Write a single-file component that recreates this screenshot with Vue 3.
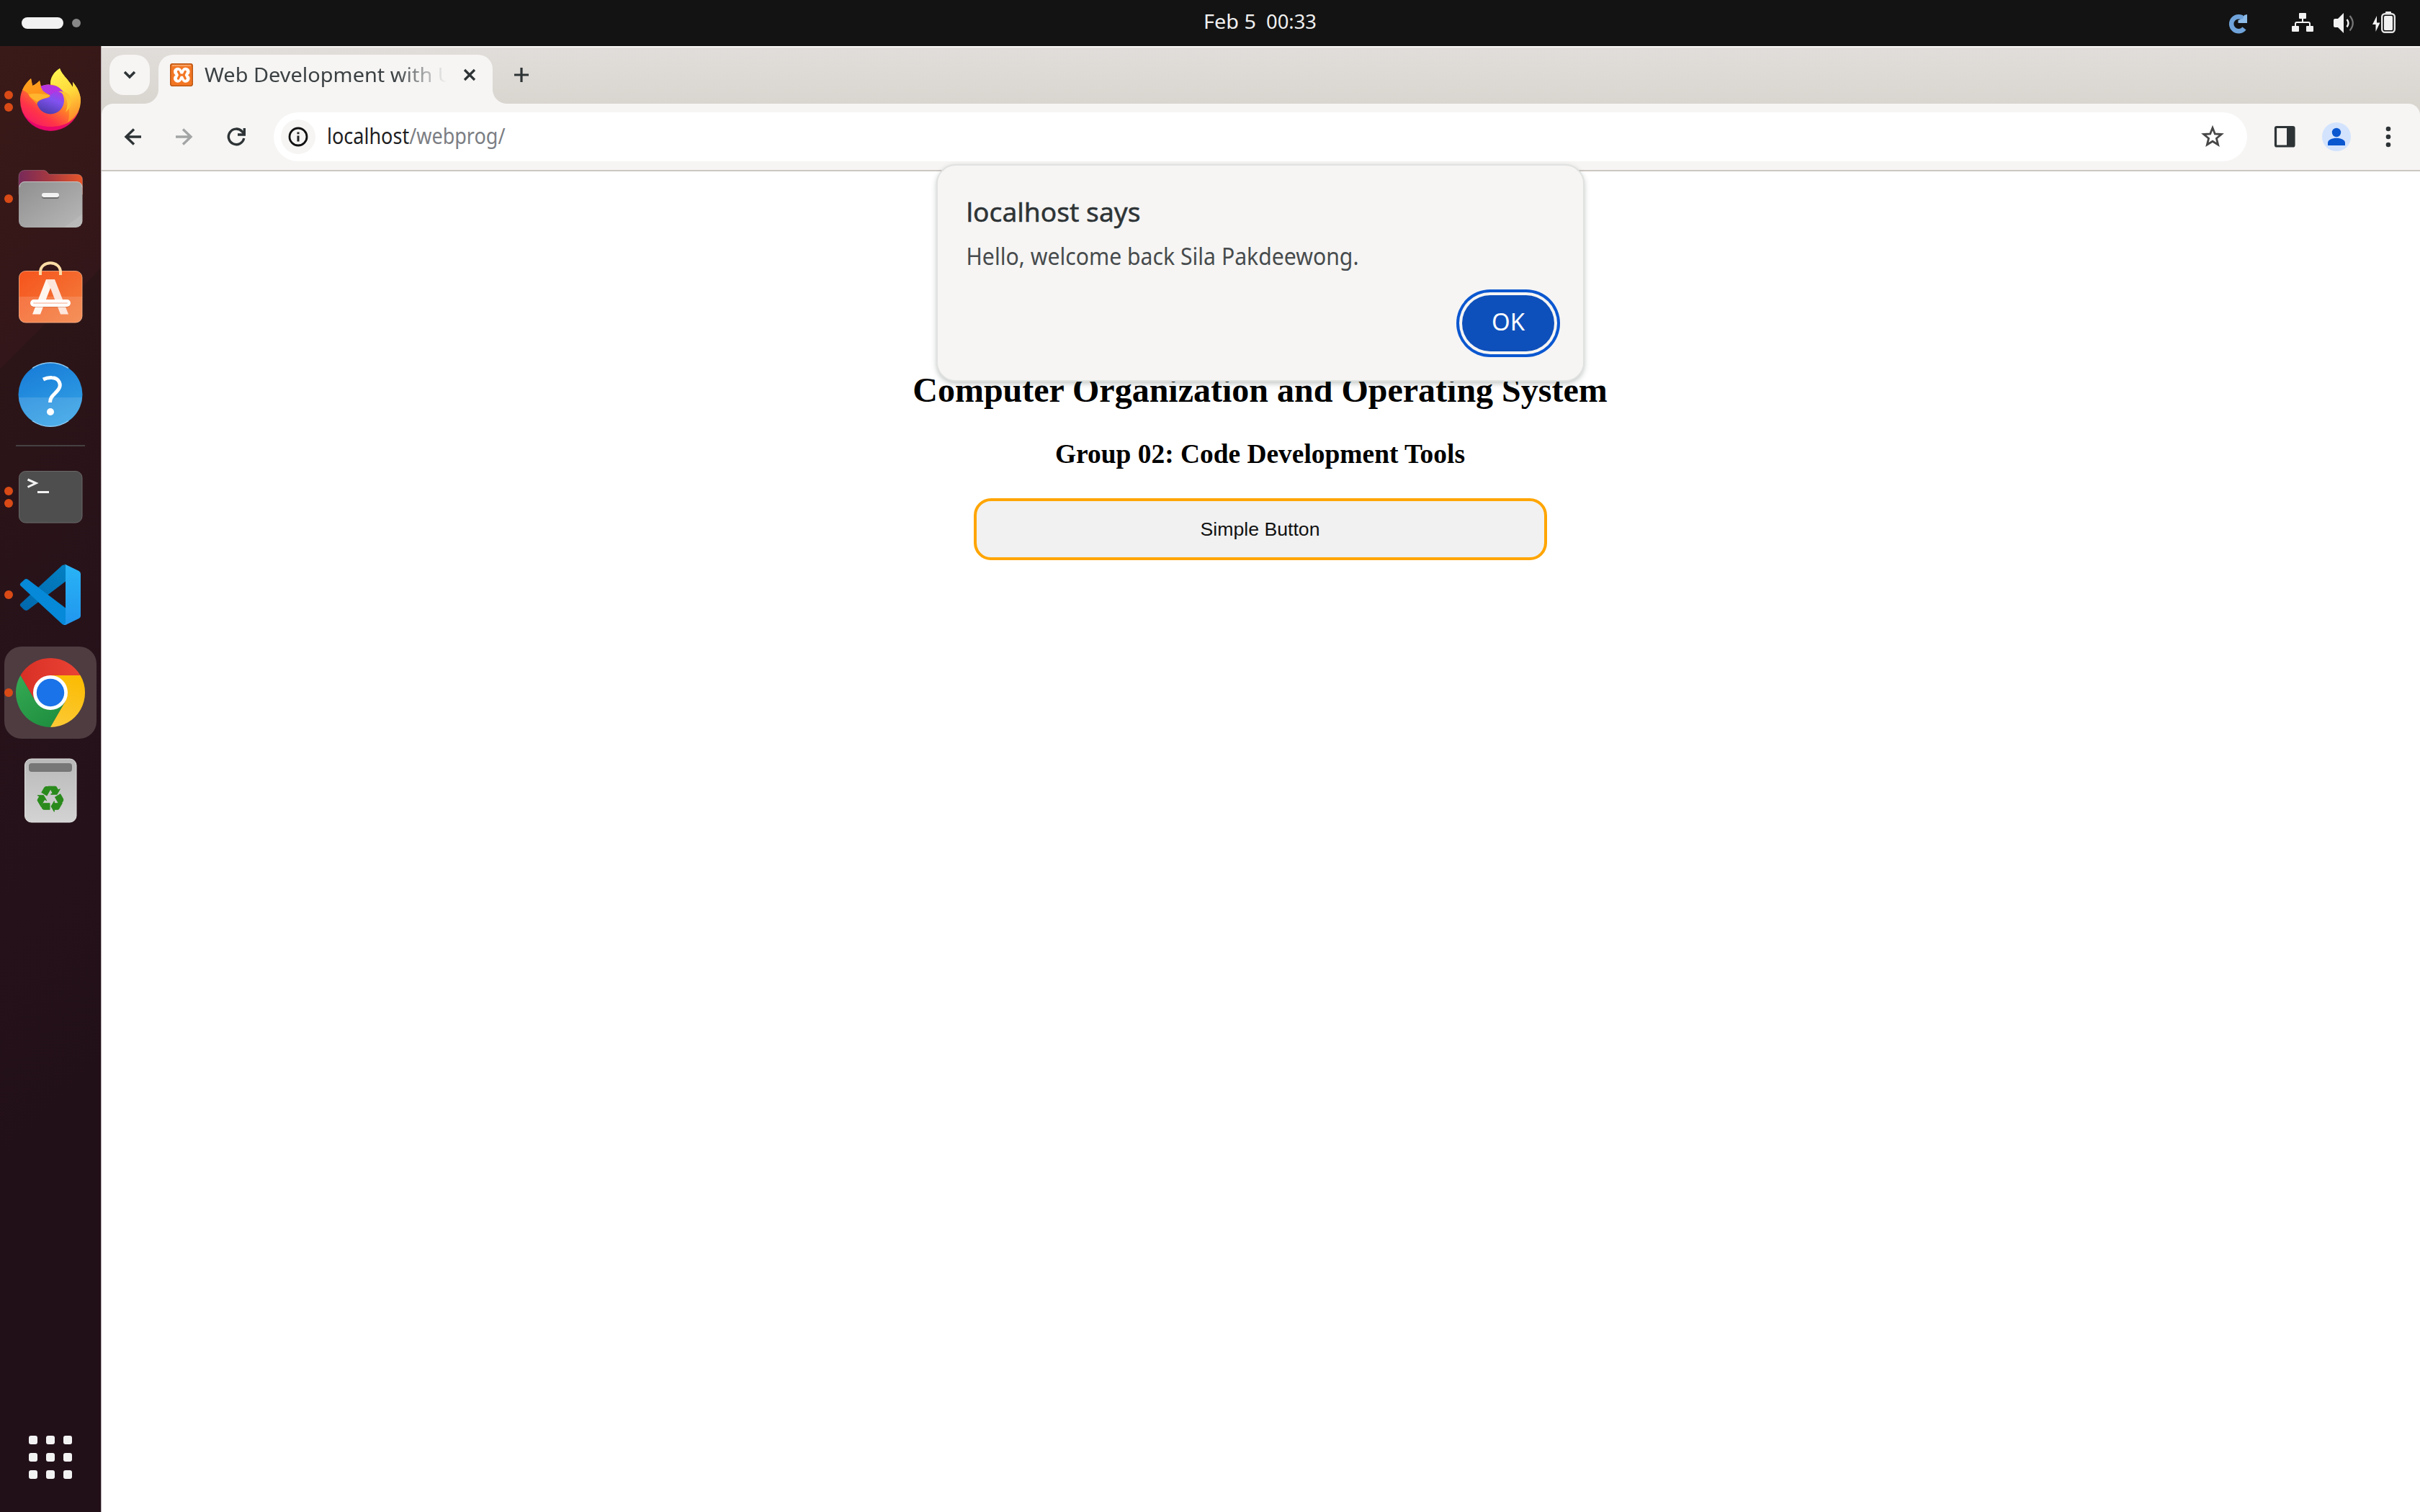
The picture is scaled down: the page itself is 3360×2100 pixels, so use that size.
<script setup>
const gridDots = [0, 1, 2, 3, 4, 5, 6, 7, 8]
</script>

<template>
  <div class="desktop">
    <header class="topbar">
      <div class="workspaces"><span class="pill"></span><span class="spot"></span></div>
      <svg class="clock" width="160" height="64" viewBox="0 0 160 64">
        <text x="-1" y="40" font-size="28" textLength="73" lengthAdjust="spacingAndGlyphs">Feb 5</text>
        <text x="86" y="40" font-size="28" textLength="70" lengthAdjust="spacingAndGlyphs">00:33</text>
      </svg>
      <svg class="tray" width="260" height="64" viewBox="3080 0 260 64">
        <path d="M3115.500 26.500A10 10 0 1 0 3116 39.500" fill="none" stroke="#6fa3da" stroke-width="6.500" />
        <path d="M3120 20V32H3107.500V28L3114 26L3116 21Z" fill="#8dbbe8" />
        <g fill="#f2f2f2">
          <rect x="3192" y="18" width="10" height="8" rx="1" /><rect x="3182" y="36" width="10" height="8" rx="1" /><rect x="3202" y="36" width="10" height="8" rx="1" />
          <path d="M3187 36V33Q3187 31 3189 31H3205Q3207 31 3207 33V36M3197 26V31" fill="none" stroke="#f2f2f2" stroke-width="2" />
          <path d="M3242 26H3246L3254 18V46L3246 38H3242Q3240 38 3240 36V28Q3240 26 3242 26Z" />
          <path d="M3258.500 27Q3262.500 32 3258.500 37.500" fill="none" stroke="#f2f2f2" stroke-width="2.400" />
          <path d="M3262.500 22Q3271 32 3262.500 42.500" fill="none" stroke="#777" stroke-width="2.200" />
          <path d="M3300 22L3294 34H3298.500V44L3304.500 31.500H3300Z" />
          <rect x="3312" y="16" width="8" height="3" rx="1" />
          <rect x="3307.200" y="19.200" width="17.600" height="25.600" rx="4" fill="none" stroke="#e4e4e4" stroke-width="2.400" />
          <rect x="3310" y="22" width="12" height="20" rx="1.500" />
        </g>
      </svg>
    </header>

    <div class="body">
      <nav class="dock">
        <div class="item">
          <span class="running"><i></i><i></i></span>
          <svg viewBox="6 76 128 128">
            <defs>
              <linearGradient id="ffBody" x1=".85" y1=".1" x2=".25" y2="1">
                <stop offset="0" stop-color="#fff44f" /><stop offset=".3" stop-color="#ffc02e" /><stop offset=".52" stop-color="#ff7a2a" /><stop offset=".75" stop-color="#ff3548" /><stop offset="1" stop-color="#f5156a" />
              </linearGradient>
              <linearGradient id="ffGlobe" x1=".7" y1="0" x2=".3" y2="1">
                <stop offset="0" stop-color="#b833e1" /><stop offset=".45" stop-color="#8152f0" /><stop offset="1" stop-color="#4a3aa8" />
              </linearGradient>
              <linearGradient id="ffFlame" x1=".3" y1="0" x2=".6" y2="1">
                <stop offset="0" stop-color="#fff44f" /><stop offset=".5" stop-color="#ffd83a" /><stop offset="1" stop-color="#ff8a2a" />
              </linearGradient>
              <linearGradient id="ffHead" x1=".2" y1="0" x2=".6" y2="1">
                <stop offset="0" stop-color="#ffa51c" /><stop offset="1" stop-color="#ff8a1c" />
              </linearGradient>
            </defs>
            <path d="M28 139C28 128 34 117 43 109L45 119C49 118 52 115 55 112L57 120C62 118 66 117 70 118L70 117C70 107 75 100 83 95C86 104 94 109 101 121L101 114C108 122 112 131 112 140A42 42 0 0 1 28 139Z" fill="url(#ffBody)" />
            <path d="M29 149A42 42 0 0 0 111 149C105 168 90 176 70 176C50 176 34 166 29 149Z" fill="#e3006e" opacity=".8" />
            <path d="M70 117C70 107 75 100 83 95C86 104 94 109 101 121L101 114C108 122 112 131 112 140C111 153 104 163 94 170C98 160 97 145 88 128C82 121 76 117 70 117Z" fill="url(#ffFlame)" />
            <circle cx="70" cy="139.500" r="19" fill="url(#ffGlobe)" />
            <path d="M81 127C92 130 97 143 91 156C98 150 100 141 98 135C95 129 88 125 81 127Z" fill="#ffc433" />
            <path d="M56 120C60 118 66 117 70 118C78 118 84 122 88 128C82 125 75 127 70 132L60 126Z" fill="#b535e0" />
            <path d="M31 125C34 118 38 113 43 109L45 119C48 118 52 115 55 112L56.500 121C58 126 63 129 69 132C71 135 66 136 61 137C55 139 52 141 51 145C46 138 40 135 40 132C38 128 34 126 31 125Z" fill="url(#ffHead)" />
            <path d="M40 131C47 129 58 130 69 132C69 136 58 136 52 141C48 139 42 136 40 131Z" fill="#ffb52e" />
          </svg>
        </div>
        <div class="item">
          <span class="running"><i></i></span>
          <svg viewBox="6 212 128 128">
            <defs>
              <linearGradient id="folder"><stop offset="0" stop-color="#77295a" /><stop offset=".5" stop-color="#a8393f" /><stop offset="1" stop-color="#e8562a" /></linearGradient>
              <linearGradient id="drawer" x1="0" y1="0" x2="1" y2="1"><stop offset="0" stop-color="#8f8f8f" /><stop offset=".85" stop-color="#b2b2b2" /><stop offset=".86" stop-color="#b9b9b9" /><stop offset="1" stop-color="#bbb" /></linearGradient>
            </defs>
            <path d="M26 270V246Q26 236.500 35 236.500H61Q63 236.500 64.500 238L68 242H106Q114.500 242 114.500 250V270Z" fill="url(#folder)" stroke="#fff" stroke-opacity=".2" />
            <rect x="26" y="252" width="88.500" height="64" rx="9" fill="url(#drawer)" />
            <path d="M27 260Q27.500 252.500 35 252.500H105.500Q113.500 252.500 114 260" fill="none" stroke="#c4c4c4" />
            <rect x="58" y="270" width="24" height="6" rx="3" fill="#6e6e6e" /><rect x="58" y="268" width="24" height="6" rx="3" fill="#f2f2f2" />
          </svg>
        </div>
        <div class="item">
          <svg viewBox="6 348 128 128">
            <defs><linearGradient id="bag" x1="0" y1="0" x2="1" y2="1"><stop offset="0" stop-color="#f6541c" /><stop offset="1" stop-color="#f37f3f" /></linearGradient></defs>
            <rect x="26.500" y="376.500" width="87.500" height="71.500" rx="9" fill="url(#bag)" stroke="#fbb085" stroke-opacity=".8" />
            <path d="M26.500 412H114V439Q114 448 105 448H35.500Q26.500 448 26.500 439Z" fill="#fff" opacity=".14" />
            <path d="M56 382V378C56 361 84 361 84 378V382" fill="none" stroke="#fbdca6" stroke-width="4" />
            <path d="M64 388H70V400L56 436.500H45Z" fill="#fff6f0" /><path d="M64 388H76L95 436.500H84L70 400Z" fill="#fde6dc" />
            <rect x="42" y="417" width="56" height="10" rx="5" fill="#c65a30" opacity=".45" />
            <rect x="42" y="416" width="56" height="10" rx="5" fill="#fff" /><rect x="46" y="420" width="48" height="2" rx="1" fill="#fbd2c2" />
          </svg>
        </div>
        <div class="item">
          <svg viewBox="6 484 128 128">
            <defs><linearGradient id="help" x1=".3" y1="0" x2=".7" y2="1"><stop offset="0" stop-color="#187dd8" /><stop offset="1" stop-color="#35a3e6" /></linearGradient></defs>
            <circle cx="70" cy="548" r="44.500" fill="url(#help)" />
            <path d="M25.700 552H114.300A44.500 44.500 0 0 1 25.700 552Z" fill="#fff" opacity=".13" />
            <path d="M45 511.500A44 44 0 0 1 95 511.500M45 584.500A44 44 0 0 0 95 584.500" fill="none" stroke="#8fcaf3" stroke-width="1.500" />
            <path d="M60 527Q66 524 72 524.500C82 525 86 534 81 541C76 548 69.500 550 69.500 559" fill="none" stroke="#fff" stroke-width="5" /><circle cx="70" cy="572" r="5" fill="#fff" />
          </svg>
        </div>
        <div class="separator"></div>
        <div class="item">
          <span class="running"><i></i><i></i></span>
          <svg viewBox="6 626 128 128">
            <rect x="26.500" y="654.500" width="87.500" height="71.500" rx="9" fill="#4e4e4e" stroke="#686868" />
            <path d="M38.500 666L50 671L38.500 676.500" fill="none" stroke="#f2f2f2" stroke-width="3" /><rect x="52" y="682" width="16" height="3" fill="#f2f2f2" />
          </svg>
        </div>
        <div class="item">
          <span class="running"><i></i></span>
          <svg viewBox="6 762 128 128">
            <defs>
              <linearGradient id="codeRight" x1="0" y1="0" x2="0" y2="1"><stop offset="0" stop-color="#29b4f6" /><stop offset="1" stop-color="#2196ee" /></linearGradient>
              <linearGradient id="codeBack" x1="1" y1="0" x2="0" y2="1"><stop offset="0" stop-color="#0380c2" /><stop offset="1" stop-color="#0267ac" /></linearGradient>
            </defs>
            <path d="M28.500 838.500L86 785.500Q88 784 91 785V807.500L39 847Q36 849 33 846.500L28.500 842Q27 840 28.500 838.500Z" fill="url(#codeBack)" />
            <path d="M28.500 813.500Q27 811.500 28.500 810L33.500 805.500Q36 803 39 805L91 844.500V867.500Q88 868.500 86 866.500Z" fill="#0589d8" />
            <path d="M91 785Q90 784 89 784Q90.500 783.500 92 784.500L109.500 793Q112 794.500 112 797V855.500Q112 857.500 109.500 859L92 867.500Q90 868.500 88 867.500Q91 866.500 91 864Z" fill="url(#codeRight)" />
          </svg>
        </div>
        <div class="item active">
          <span class="running"><i></i></span>
          <svg viewBox="6 898 128 128">
            <defs>
              <linearGradient id="crRed"><stop offset="0" stop-color="#d93025" /><stop offset="1" stop-color="#ea4335" /></linearGradient>
              <linearGradient id="crGreen" x1=".2" y1="0" x2=".8" y2="1"><stop offset="0" stop-color="#34a853" /><stop offset="1" stop-color="#1e8e3e" /></linearGradient>
              <linearGradient id="crYellow" x1=".5" y1="0" x2=".3" y2="1"><stop offset="0" stop-color="#fbbc04" /><stop offset="1" stop-color="#fcc934" /></linearGradient>
            </defs>
            <path d="M28.400 938A48 48 0 0 1 111.600 938H70V962L49.200 974Z" fill="url(#crRed)" />
            <path d="M28.400 938A48 48 0 0 0 70 1010L90.800 974L70 962L49.200 974Z" fill="url(#crGreen)" />
            <path d="M111.600 938A48 48 0 0 1 70 1010L90.800 974L70 962V938Z" fill="url(#crYellow)" />
            <circle cx="70" cy="962" r="24" fill="#fff" /><circle cx="70" cy="962" r="19.200" fill="#1a73e8" />
          </svg>
        </div>
        <div class="item">
          <svg viewBox="6 1034 128 128">
            <defs><linearGradient id="bin" x1="0" y1="0" x2="0" y2="1"><stop offset="0" stop-color="#b9b9b9" /><stop offset="1" stop-color="#d3d3d3" /></linearGradient></defs>
            <rect x="34.500" y="1054" width="71.500" height="88" rx="9" fill="url(#bin)" stroke="#e0e0e0" />
            <rect x="40" y="1060" width="60" height="12" rx="4" fill="#777" />
            <text class="recycle" x="70" y="1126.500" text-anchor="middle">&#x267B;&#xFE0E;</text>
          </svg>
        </div>
        <div class="apps"><span v-for="n in gridDots" :key="n"></span></div>
      </nav>

      <section class="window">
        <div class="tabstrip">
          <div class="tabsearch"><svg width="56" height="56" viewBox="0 0 56 56"><path d="M21 24L28 31L35 24" fill="none" stroke="#2e3436" stroke-width="3.500" /></svg></div>
          <div class="tab">
            <svg class="favicon" width="32" height="32" viewBox="0 0 32 32">
              <rect x=".7" y=".7" width="30.600" height="30.600" rx="3" fill="#f37623" stroke="#bd5a17" stroke-width="1.600" />
              <path d="M3 3H29" stroke="#f9b27d" stroke-width="1.500" />
              <g fill="#fff"><circle cx="10.800" cy="11.500" r="5.800" /><circle cx="21.800" cy="11.500" r="5.800" /><circle cx="10.800" cy="21" r="5.800" /><circle cx="21.800" cy="21" r="5.800" /><rect x="8" y="10" width="16.500" height="12.500" /></g>
              <path d="M11.500 11.500L13.800 16.200L11.500 21M21.200 11.500L18.900 16.200L21.200 21M13.800 16.200H18.900" fill="none" stroke="#f37623" stroke-width="3.200" stroke-linecap="round" />
            </svg>
            <svg class="tabtitle" width="340" height="68" viewBox="0 0 340 68"><text x="0" y="38" font-size="28" textLength="345" lengthAdjust="spacingAndGlyphs">Web Development with U</text></svg>
            <svg class="close" width="20" height="20" viewBox="0 0 20 20"><path d="M3 3L17 17M17 3L3 17" stroke="#2e3436" stroke-width="3.200" /></svg>
          </div>
          <svg class="newtab" width="24" height="24" viewBox="0 0 24 24"><path d="M12 2V22M2 12H22" stroke="#2e3436" stroke-width="3.200" /></svg>
        </div>

        <div class="toolbar">
          <svg class="nav" width="200" height="92" viewBox="160 144 200 92">
            <g fill="none" stroke-width="3.400">
              <path d="M196 190H175M186 179.500L175 190L186 200.500" stroke="#2e3436" />
              <path d="M244 190H265M254 179.500L265 190L254 200.500" stroke="#a3a5a5" />
              <path d="M338.700 192A10.800 10.800 0 1 1 336 182.500L338.500 185.500" stroke="#2e3436" />
              <path d="M339.300 178V187H330" stroke="#2e3436" />
            </g>
          </svg>
          <div class="omnibox">
            <div class="info">
              <svg width="28" height="28" viewBox="0 0 28 28"><circle cx="14" cy="14" r="12" fill="none" stroke="#111" stroke-width="2.800" /><path d="M14 12.500V20.500M14 7.500V10.300" stroke="#222" stroke-width="3" /></svg>
            </div>
            <svg class="url" width="260" height="68" viewBox="0 0 260 68">
              <text x="0" y="43" font-size="30" fill="#7c7e84" textLength="247.500" lengthAdjust="spacingAndGlyphs"><tspan fill="#1f1f24">localhost</tspan>/webprog/</text>
            </svg>
            <svg class="star" width="36" height="36" viewBox="0 0 36 36"><path d="M18 5.500L21.300 13.900L30.300 14.500L23.400 20.200L25.600 29L18 24.200L10.400 29L12.600 20.200L5.700 14.500L14.700 13.900Z" fill="none" stroke="#474747" stroke-width="2.800" /></svg>
          </div>
          <svg class="actions" width="200" height="92" viewBox="3140 144 200 92">
            <rect x="3159.500" y="176.500" width="25.500" height="26.500" rx="1.500" fill="none" stroke="#2e3436" stroke-width="3.200" /><path d="M3175 176H3186V204H3175Z" fill="#2e3436" />
            <circle cx="3244" cy="190" r="20" fill="#d3e3fd" /><circle cx="3244" cy="184" r="6.200" fill="#0b57d0" /><path d="M3232 202V198.500C3232 189.500 3256 189.500 3256 198.500V202Z" fill="#0b57d0" />
            <g fill="#2e3436"><circle cx="3316" cy="179" r="3.300" /><circle cx="3316" cy="190" r="3.300" /><circle cx="3316" cy="201" r="3.300" /></g>
          </svg>
        </div>

        <main class="page">
          <h2>Computer Organization and Operating System</h2>
          <h3>Group 02: Code Development Tools</h3>
          <button class="simple">Simple Button</button>
        </main>

        <div class="alert">
          <svg class="alerttext" width="600" height="160" viewBox="0 0 600 160">
            <text x="-1.500" y="77.500" font-size="36.500" fill="#2e3436" stroke="#2e3436" stroke-width=".5" textLength="242" lengthAdjust="spacingAndGlyphs">localhost says</text>
            <text x="-1.500" y="137.500" font-size="32" fill="#474b4d" textLength="545" lengthAdjust="spacingAndGlyphs">Hello, welcome back Sila Pakdeewong.</text>
          </svg>
          <button class="ok"><svg width="48" height="78" viewBox="0 0 48 78"><text x="1" y="49" font-size="32" fill="#fff" textLength="46" lengthAdjust="spacingAndGlyphs">OK</text></svg></button>
        </div>
      </section>
    </div>
  </div>
</template>

<style>
body { margin: 0; overflow: hidden; }
</style>

<style scoped>
* { box-sizing: border-box; }
svg { display: block; flex: none; }
.desktop { width: 3360px; height: 2100px; display: flex; flex-direction: column; font-family: "Noto Sans", "Open Sans", sans-serif; background: #fff; }
.topbar { height: 64px; flex: none; background: #131313; display: grid; grid-template-columns: 1672px 160px 1fr; align-items: center; }
.workspaces { display: flex; align-items: center; gap: 12px; padding-left: 30px; }
.pill { width: 58px; height: 16px; border-radius: 8px; background: #f2f2f2; }
.spot { width: 12px; height: 12px; border-radius: 50%; background: #888; }
.clock { fill: #f0f0f0; overflow: visible; }
.tray { justify-self: end; margin-right: 20px; }
.body { flex: 1; display: flex; min-height: 0; }
.dock { width: 140px; flex: none; display: flex; flex-direction: column; align-items: center; gap: 8px; padding-top: 12px; background: linear-gradient(135deg, #3a1a18 0, #331619 316px, #2c1517 318px, #27121a 640px, #221019 1100px); }
.item { width: 128px; height: 128px; display: flex; align-items: center; border-radius: 24px; }
.item svg { width: 128px; height: 128px; }
.item.active { background: #4e3c41; }
.running { width: 12px; margin-right: -12px; display: flex; flex-direction: column; gap: 5px; z-index: 1; }
.running i { width: 12px; height: 12px; border-radius: 50%; background: #d94a16; }
.separator { width: 96px; height: 2px; background: #454043; margin: -2px 0; }
.recycle { font-family: "DejaVu Sans", sans-serif; font-size: 49px; fill: #2a8a1c; stroke: #2a8a1c; stroke-width: 1px; }
.apps { margin-top: auto; margin-bottom: 46px; display: grid; grid-template-columns: repeat(3, 12px); gap: 12px; }
.apps span { height: 12px; border-radius: 3px; background: #f2f2f2; }
.window { position: relative; flex: 1; min-width: 0; display: flex; flex-direction: column; border-left: 1px solid #b3abad; background: #fff; }
.tabstrip { height: 80px; flex: none; display: flex; align-items: flex-start; padding: 10px 0 0 11px; border-top: 2px solid #f7f6f5; background: linear-gradient(#e1ddda, #d9d5cf); }
.tabsearch { width: 56px; height: 56px; border-radius: 20px; background: #f6f5f4; margin-right: 12px; }
.tab { position: relative; width: 464px; height: 68px; border-radius: 20px 20px 0 0; background: #f6f5f4; display: flex; align-items: center; padding-left: 16px; }
.tab::before, .tab::after { content: ""; position: absolute; bottom: 0; width: 20px; height: 20px; }
.tab::before { left: -20px; background: radial-gradient(circle at 0 0, transparent 19.500px, #f6f5f4 20.500px); }
.tab::after { right: -20px; background: radial-gradient(circle at 100% 0, transparent 19.500px, #f6f5f4 20.500px); }
.favicon { margin: -12px 16px 0 0; }
.tabtitle { fill: #3c4143; -webkit-mask-image: linear-gradient(90deg, #000 265px, transparent 336px); mask-image: linear-gradient(90deg, #000 265px, transparent 336px); }
.close { margin: -12px 0 0 18px; }
.newtab { margin: 16px 0 0 28px; }
.toolbar { height: 94px; flex: none; display: flex; padding-left: 19px; border-bottom: 2px solid #cdc7c2; background: radial-gradient(circle at 16px 16px, #f6f5f4 15.500px, #d9d5cf 16.500px) 0 0 / 16px 16px no-repeat, radial-gradient(circle at 0 16px, #f6f5f4 15.500px, #d9d5cf 16.500px) 100% 0 / 16px 16px no-repeat, linear-gradient(#f6f5f4, #f6f5f4) 0 16px no-repeat, linear-gradient(#f6f5f4, #f6f5f4) 16px 0 / calc(100% - 32px) 100% no-repeat; }
.omnibox { width: 2740px; height: 68px; margin: 12px 20px 0; border-radius: 34px; background: #fff; display: flex; align-items: center; padding-left: 10px; }
.info { width: 48px; height: 48px; border-radius: 50%; background: #f6f5f4; display: flex; align-items: center; justify-content: center; margin-right: 16px; }
.url { margin-top: 1px; }
.star { margin-left: auto; margin-right: 30px; }
.page { flex: 1; display: flex; flex-direction: column; align-items: center; gap: 40px; margin-left: -1px; padding: 276px 1px 0 0; color: #000; font-family: "Liberation Serif", serif; clip-path: inset(0 0 0 1px); }
h2, h3 { margin: 0; font-weight: bold; white-space: nowrap; }
h2 { font-size: 48px; line-height: 56px; }
h3 { font-size: 37.440px; line-height: 42px; }
.simple { width: 796px; height: 86px; border: 4px solid #ffa500; border-radius: 24px; background: #f1f1f1; color: #111; font: 26.667px "Liberation Sans", sans-serif; padding: 0; }
.alert { position: absolute; left: 1159px; top: 164px; width: 900px; height: 302px; border: 2px solid #e0e2e0; border-radius: 27px; background: #f6f5f4; background-clip: padding-box; box-shadow: 0 3px 7px rgba(60, 75, 70, .3); padding-left: 41px; display: flex; flex-direction: column; }
.alerttext { height: 160px; overflow: visible; }
.ok { align-self: flex-end; width: 128px; height: 78px; margin: 20px 40px 0 0; padding: 0; border: 0; border-radius: 39px; background: #0e50bb; box-shadow: 0 0 0 4px #f6f5f4, 0 0 0 8px #0b57d0; display: flex; align-items: center; justify-content: center; font-family: inherit; }
</style>
